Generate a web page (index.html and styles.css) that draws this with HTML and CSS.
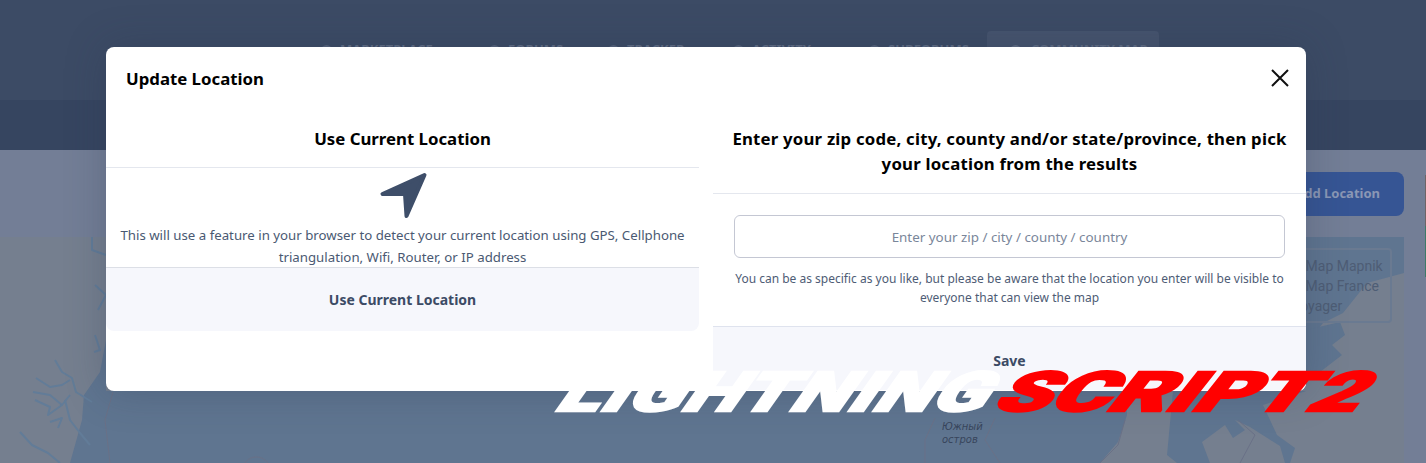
FILE: index.html
```html
<!DOCTYPE html>
<html lang="en">
<head>
<meta charset="utf-8">
<title>Update Location</title>
<link rel="stylesheet" href="styles.css">
</head>
<body>
<div class="app">
  <header class="topbar">
    <nav class="nav">
      <span class="nav-item nav-market">MARKETPLACE</span>
      <span class="nav-item nav-forums">FORUMS</span>
      <span class="nav-item nav-tracker">TRACKER</span>
      <span class="nav-item nav-activity">ACTIVITY</span>
      <span class="nav-item nav-sub">SUBFORUMS</span>
      <span class="nav-item nav-active">COMMUNITY MAP</span>
    </nav>
  </header>
  <div class="subbar"></div>
  <main class="content">
    <div class="toolbar"><button class="add-btn">Add Location</button></div>
    <div class="map">
      <svg class="map-art" viewBox="0 237 1404 226" preserveAspectRatio="none" aria-hidden="true">
        <path class="water" d="M106 340L100 372L84 395L82 420L70 463H1100L1118 442L1127 415L1127 391H106Z"/>
        <path class="water" d="M1173 391L1167 455L1177 463H1290L1295 448L1277 435L1263 405L1306 391Z"/>
        <path class="land" d="M1210 463L1202 442L1225 425L1233 438L1245 430L1235 420L1250 427L1280 446L1285 463Z"/>
        <path class="water" d="M1270 237H1404V273L1367 283L1343 313L1323 323L1306 345L1270 345Z"/>
        <path class="water" d="M1306 330L1340 322L1345 335L1332 345L1342 355L1320 372L1306 380Z"/>
        <g class="river">
          <path d="M55 360L62 372L72 378L76 392L92 402"/>
          <path d="M36 378L50 387L62 385L70 380"/>
          <path d="M33 392L50 395L62 405L70 395"/>
          <path d="M35 400L50 407L48 415L62 405"/>
          <path d="M65 400L70 420L80 433L90 445"/>
          <path d="M50 422L62 418L58 428"/>
          <path d="M20 432L32 445L48 453L60 463"/>
          <path d="M92 237L92 250L106 255"/>
          <path d="M95 285L106 295L98 310"/>
          <path d="M95 335L100 350L94 352"/>
        </g>
        <path class="border-line" d="M113 392L105 420L110 463"/>
        <path class="border-line" d="M245 463C250 455 262 455 268 463"/>
        <path class="border-line" d="M925 463L925 440L935 418M995 418L985 440L1000 463M1125 420L1118 445L1100 463M1238 420L1255 435L1248 448L1240 463"/>
      </svg>
      <div class="layers">
        <span class="layer-row">OpenStreetMap Mapnik</span>
        <span class="layer-row">OpenStreetMap France</span>
        <span class="layer-row">CartoDB Voyager</span>
      </div>
      <span class="island">Южный<br>остров</span>
    </div>
  </main>
  <div class="edge-strip"></div>

  <section class="modal">
    <div class="modal-head">
      <h2 class="modal-title">Update Location</h2>
      <button class="close" aria-label="Close">
        <svg width="18" height="18" viewBox="0 0 18 18"><path d="M1 1L17 17M17 1L1 17"/></svg>
      </button>
    </div>
    <div class="modal-body">
      <div class="col">
        <h3 class="col-title">Use Current Location</h3>
        <div class="col-main">
          <svg class="nav-icon" width="50" height="52" viewBox="0 0 50 52" aria-hidden="true"><path d="M46.500 5L4.500 24L27 24L28.500 46Z"/></svg>
          <p class="desc">This will use a feature in your browser to detect your current location using GPS, Cellphone triangulation, Wifi, Router, or IP address</p>
        </div>
        <div class="col-foot col-foot-left">Use Current Location</div>
      </div>
      <div class="col">
        <h3 class="col-title col-title-right">Enter your zip code, city, county and/or state/province, then pick your location from the results</h3>
        <div class="col-form">
          <input class="field" type="text" placeholder="Enter your zip / city / county / country">
          <p class="help">You can be as specific as you like, but please be aware that the location you enter will be visible to everyone that can view the map</p>
        </div>
        <div class="col-foot col-foot-right">Save</div>
      </div>
    </div>
  </section>

  <div class="logo"><span class="logo-a">LIGHTNING</span><span class="logo-b">SCRIPT2</span></div>
</div>
</body>
</html>
```
FILE: styles.css
```css
* { box-sizing: border-box; }
html, body { margin: 0; padding: 0; }
body { font-family: "Noto Sans", sans-serif; }

.app {
  position: relative;
  width: 1426px;
  height: 463px;
  overflow: hidden;
  background: #737e96;
}

.topbar { height: 100px; background: #3c4b65; position: relative; }
.nav { position: relative; height: 100px; }
.nav-item {
  position: absolute;
  top: 41px;
  font-size: 13px;
  font-weight: 700;
  color: #616e85;
  line-height: 16px;
  white-space: nowrap;
}
.nav-item::before {
  content: "";
  position: absolute;
  left: -19px;
  top: 4px;
  width: 11px;
  height: 11px;
  border-radius: 50%;
  background: #56647c;
}
.nav-market { left: 340px; }
.nav-forums { left: 508px; }
.nav-tracker { left: 627px; }
.nav-activity { left: 752px; }
.nav-sub { left: 888px; }
.nav-active {
  left: 987px;
  top: 31px;
  width: 172px;
  height: 40px;
  padding: 10px 0 0 44px;
  background: #46546e;
  border-radius: 4px;
}
.nav-active::before { left: 23px; top: 14px; background: #616e85; }

.subbar { height: 50px; background: #364560; }

.content { height: 313px; position: relative; }
.toolbar { height: 87px; padding: 22px 22px 0 0; display: flex; justify-content: flex-end; }
.add-btn {
  width: 150px;
  height: 44px;
  border: 0;
  border-radius: 8px;
  background: #365594;
  color: #8a97b5;
  font: 700 13px "Noto Sans", sans-serif;
  text-align: right;
  padding: 0 24px 2px 0;
}

.map {
  position: relative;
  width: 1404px;
  height: 226px;
  background: #757f8f;
}
.map-art { position: absolute; inset: 0; width: 100%; height: 100%; display: block; }
.water { fill: #5f7590; }
.river { fill: none; stroke: #627c98; stroke-width: 2; stroke-linejoin: round; }
.border-line { fill: none; stroke: #6a7187; stroke-width: 1; }
.land { fill: #757f8f; }

.layers {
  position: absolute;
  right: 12px;
  top: 11px;
  width: 200px;
  height: 75px;
  border: 2px solid #6a7a91;
  border-radius: 4px;
  padding: 6px 0 0 42px;
  display: flex;
  flex-direction: column;
  align-items: flex-start;
  font: 14px/20px Roboto, sans-serif;
  color: #4e5d75;
}
.layer-row { white-space: nowrap; }

.island {
  position: absolute;
  left: 942px;
  top: 183px;
  font: italic 10px/13px "DejaVu Sans", sans-serif;
  color: #38455c;
}

.edge-strip {
  position: absolute;
  left: 1425px;
  top: 175px;
  width: 1px;
  height: 102px;
  background: linear-gradient(#6e6466 50%, #3d7a68 50%);
}

.modal {
  position: absolute;
  left: 106px;
  top: 47px;
  width: 1200px;
  height: 344px;
  background: #fff;
  border-radius: 8px;
  overflow: hidden;
  box-shadow: 0 0 40px rgba(40, 50, 75, .28);
  color: #000;
}
.modal-head {
  display: flex;
  justify-content: space-between;
  align-items: flex-start;
  padding: 20px 17px 21px 20px;
}
.modal-title { margin: 0; font-size: 16.800px; line-height: 24px; font-weight: 700; }
.close { border: 0; background: none; padding: 0; height: 18px; margin-top: 2px; display: block; }
.close svg { display: block; }
.close path { fill: none; stroke: #101010; stroke-width: 2; }

.modal-body { display: grid; grid-template-columns: 593px 593px; column-gap: 14px; align-items: start; }
.col { display: flex; flex-direction: column; }
.col-title {
  margin: 0;
  padding: 14px 10px 16px;
  border-bottom: 1px solid #e4e7ee;
  font-size: 16.800px;
  line-height: 25px;
  font-weight: 700;
  text-align: center;
}
.col-title-right { padding-bottom: 17px; letter-spacing: .2px; }
.col-main { display: flex; flex-direction: column; align-items: center; }
.nav-icon { display: block; margin: 2px 0 2px; }
.nav-icon path { fill: #3e4e69; stroke: #3e4e69; stroke-width: 4; stroke-linejoin: round; }
.desc { margin: 0; padding: 0 10px; font-size: 13.250px; line-height: 22px; color: #4a5972; text-align: center; }
.col-foot {
  height: 64px;
  background: #f6f7fc;
  border-top: 1px solid #dfe3ee;
  font-size: 14px;
  font-weight: 700;
  color: #3c4b65;
  display: flex;
  align-items: center;
  justify-content: center;
}
.col-foot-left { border-radius: 0 0 8px 8px; margin-top: -1px; border-top-color: #dcdfe6; }
.col-foot-right { padding-top: 3px; }
.col-form { padding: 21px 21px 0; height: 132px; }
.field {
  display: block;
  width: 100%;
  height: 43px;
  border: 1px solid #c4c7d3;
  border-radius: 6px;
  background: #fff;
  font: 13.400px "Noto Sans", sans-serif;
  color: #7a869a;
  text-align: center;
  outline: 0;
}
.field::placeholder { color: #7a869a; opacity: 1; }
.help { margin: 11px 0 0; font-size: 12px; line-height: 19px; color: #4e5c75; text-align: center; }

.logo {
  position: absolute;
  left: 551px;
  top: 371px;
  width: 830px;
  height: 42px;
  display: flex;
  font-family: Roboto, "Liberation Sans", sans-serif;
  font-weight: 900;
  font-size: 55px;
  line-height: 42px;
  white-space: nowrap;
  -webkit-text-stroke: 2.500px currentColor;
}
.logo-a, .logo-b { display: block; transform-origin: 0 100%; }
.logo-a { color: #fff; letter-spacing: 1px; width: 449px; flex: none; transform: scaleX(1.45) skewX(-26deg); }
.logo-b { color: #f00; flex: none; margin-left: -12px; transform: scaleX(1.62) skewX(-26deg); }
```
